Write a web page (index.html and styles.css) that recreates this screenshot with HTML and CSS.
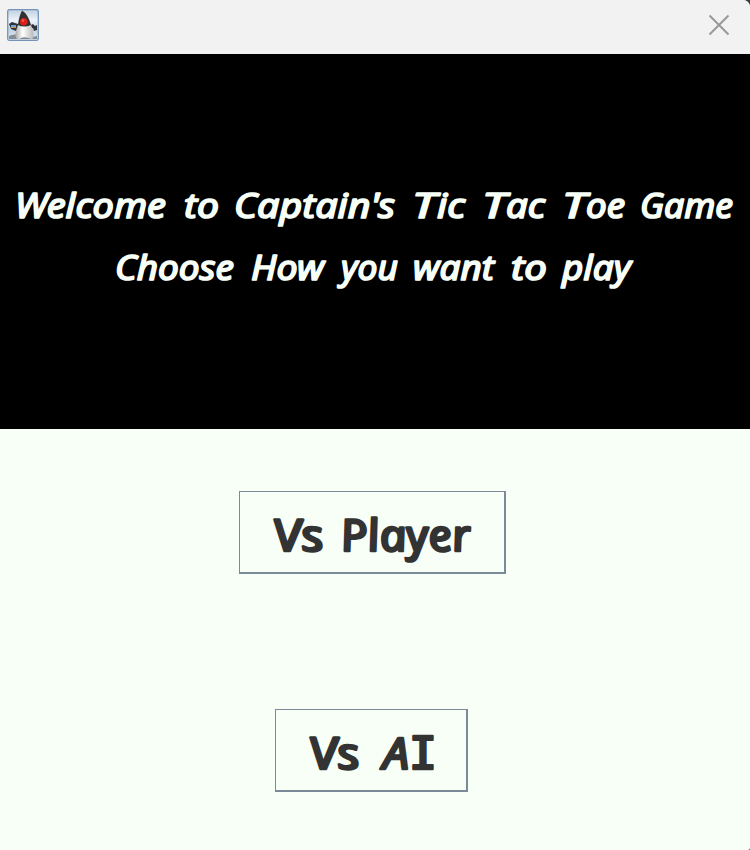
FILE: index.html
```html
<!DOCTYPE html>
<html lang="en">
<head>
<meta charset="utf-8">
<title>Captain's Tic Tac Toe</title>
<link rel="stylesheet" href="styles.css">
</head>
<body>
<div class="window">
  <header class="titlebar">
    <svg class="duke" viewBox="0 0 32 32" aria-hidden="true">
      <defs>
        <linearGradient id="sky" x1="0" y1="0" x2="0" y2="1"><stop offset="0" stop-color="#bfcfdf"/><stop offset=".35" stop-color="#edf3fa"/><stop offset=".65" stop-color="#c4d4e4"/><stop offset="1" stop-color="#dce6f0"/></linearGradient>
        <linearGradient id="belly" x1="0" y1="0" x2="1" y2="0"><stop offset="0" stop-color="#a8a8a8"/><stop offset=".4" stop-color="#fff"/><stop offset="1" stop-color="#b8b8b8"/></linearGradient>
      </defs>
      <rect x=".7" y=".7" width="30.6" height="30.6" rx="1.5" fill="url(#sky)" stroke="#7394b8" stroke-width="1.3"/>
      <path d="M2 27Q8 24 13 27T30 27V30H2Z" fill="#858b92"/>
      <path d="M2 15L5 13L11 15L12 18L9 22L4 20Z" fill="#30343a"/>
      <path d="M4 16H9V18H4Z" fill="#6fa4d0"/>
      <path d="M4 18.5H9" stroke="#c99a50"/>
      <path d="M22 17L26 15L28 17L30 16L30 21L27 22L26 19L23 20Z" fill="#30343a"/>
      <path d="M12 14Q8 22 8.5 28Q10 32 14 29Q18 27 22 29Q27 32 26.5 26Q26 19 23 14Z" fill="url(#belly)"/>
      <path d="M15 1.5Q21 5 24 16Q17 19 11 16Q12 7 15 1.5Z" fill="#303030"/>
      <circle cx="16.8" cy="12.7" r="3.8" fill="#d9201c"/>
      <circle cx="16" cy="11.5" r="1.2" fill="#f85a4c"/>
    </svg>
    <svg class="close" viewBox="0 0 20 20" aria-label="Close"><path d="M.5 .5L19.5 19.5M19.5 .5L.5 19.5"/></svg>
  </header>
  <section class="banner">
    <svg class="line" viewBox="0 0 750 62">
      <text x="15" y="43" textLength="151" lengthAdjust="spacingAndGlyphs">Welcome</text>
      <text x="184" y="43" textLength="35" lengthAdjust="spacingAndGlyphs">to</text>
      <text x="234" y="43" textLength="161" lengthAdjust="spacingAndGlyphs">Captain's</text>
      <text y="43"><tspan x="412" textLength="24" lengthAdjust="spacingAndGlyphs">T</tspan><tspan x="437" textLength="28" lengthAdjust="spacingAndGlyphs">ic</tspan></text>
      <text y="43"><tspan x="482" textLength="24" lengthAdjust="spacingAndGlyphs">T</tspan><tspan x="506" textLength="39" lengthAdjust="spacingAndGlyphs">ac</tspan></text>
      <text y="43"><tspan x="562" textLength="24" lengthAdjust="spacingAndGlyphs">T</tspan><tspan x="586" textLength="39" lengthAdjust="spacingAndGlyphs">oe</tspan></text>
      <text x="640" y="43" textLength="93" lengthAdjust="spacingAndGlyphs">Game</text>
    </svg>
    <svg class="line" viewBox="0 0 750 62">
      <text x="115" y="43" textLength="119" lengthAdjust="spacingAndGlyphs">Choose</text>
      <text x="251" y="43" textLength="73" lengthAdjust="spacingAndGlyphs">How</text>
      <text x="341" y="43" textLength="57" lengthAdjust="spacingAndGlyphs">you</text>
      <text x="413" y="43" textLength="81" lengthAdjust="spacingAndGlyphs">want</text>
      <text x="511" y="43" textLength="36" lengthAdjust="spacingAndGlyphs">to</text>
      <text x="562" y="43" textLength="69" lengthAdjust="spacingAndGlyphs">play</text>
    </svg>
  </section>
  <main class="choices">
    <button class="choice player">
      <svg viewBox="0 0 264 80">
        <g transform="translate(0 59) skewX(11)">
          <text x="36" y="0" textLength="50" lengthAdjust="spacingAndGlyphs">Vs</text>
          <text x="103" y="0" textLength="130" lengthAdjust="spacingAndGlyphs">Player</text>
        </g>
      </svg>
    </button>
    <button class="choice ai">
      <svg viewBox="0 0 190 80">
        <g transform="translate(0 59) skewX(11)">
          <text x="36" y="0" textLength="50" lengthAdjust="spacingAndGlyphs">Vs</text>
        </g>
        <text x="107" y="59" textLength="54" lengthAdjust="spacingAndGlyphs">A<tspan class="serif-i">I</tspan></text>
      </svg>
    </button>
  </main>
</div>
</body>
</html>
```
FILE: styles.css
```css
body { margin: 0; background: #3b3b3b; }
.window {
  width: 750px;
  height: 850px;
  overflow: hidden;
  border-radius: 1px 7px 2px 0;
  background: #f7fff7;
  font-family: "Comic Sans MS", "Noto Sans", sans-serif;
}
.titlebar {
  box-sizing: border-box;
  height: 54px;
  padding: 0 21px 4px 7px;
  display: flex;
  align-items: center;
  justify-content: space-between;
  background: #f2f2f2;
}
.duke { width: 32px; height: 32px; }
.close { width: 20px; height: 20px; overflow: visible; }
.close path { stroke: #999; stroke-width: 2; fill: none; }
.banner {
  box-sizing: border-box;
  height: 375px;
  padding-top: 121px;
  background: #000;
}
.line { display: block; width: 750px; height: 62px; overflow: visible; }
text {
  font-style: italic;
  font-weight: 400;
  stroke-linejoin: round;
  stroke-linecap: round;
}
.line text {
  font-size: 34.5px;
  fill: #f7fff7;
  stroke: #f7fff7;
  stroke-width: 1.7px;
}
.choices {
  display: flex;
  flex-direction: column;
  align-items: center;
  gap: 135px;
  padding: 62px 5px 0 0;
}
.choice {
  box-sizing: border-box;
  height: 83px;
  padding: 0;
  border: solid #7a8a99;
  border-width: 1px 2px 2px 1px;
  background: #f7fff7;
  font-family: inherit;
}
.player { width: 267px; }
.ai { width: 193px; margin-right: 2px; }
.choice svg { display: block; width: 100%; height: 80px; overflow: visible; }
.choice text {
  font-size: 44px;
  fill: #333;
  stroke: #333;
  stroke-width: 2.6px;
}
.choice .serif-i {
  font-family: "DejaVu Sans Mono", monospace;
  font-style: normal;
}
```
